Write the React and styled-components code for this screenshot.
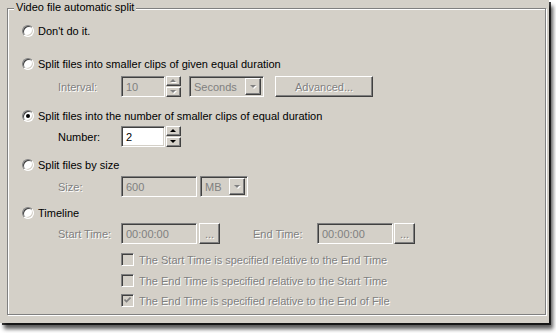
import React from 'react';
import styled, { createGlobalStyle, css } from 'styled-components';

const Global = createGlobalStyle`
    html, body { margin: 0; padding: 0; background: #fff; }
    body {
        min-height: 333px;
        font-family: "Liberation Sans", Arial, sans-serif;
        font-size: 11px;
        color: #000;
    }
`

const face = '#d4d0c8';

const Window = styled.div`
    width: 549px;
    height: 323px;
    margin-bottom: 10px;
    background: ${face};
    box-shadow: 2px 2px 0 rgba(0,0,0,0.75), 4px 6px 4px rgba(0,0,0,0.65);
    padding: 8px 4px 0 7px;
    box-sizing: border-box;
`

const GroupBox = styled.div`
    position: relative;
    width: 539px;
    height: 307px;
    box-sizing: border-box;
    border: 1px solid #808080;
    box-shadow: inset 1px 1px 0 #fff, 1px 1px 0 #fff;
    padding: 15px 0 0 14px;
`

const Legend = styled.span`
    position: absolute;
    top: -8px;
    left: 6px;
    padding: 0 2px 0 2px;
    background: ${face};
    line-height: 13px;
`

const OptionRow = styled.label`
    display: flex;
    align-items: center;
    height: 13px;
    margin-top: ${({ $mt }) => $mt || 0}px;
    gap: 4px;
`

const Radio = styled.span`
    width: 12px;
    height: 12px;
    box-sizing: border-box;
    border-radius: 50%;
    border: 1px solid;
    border-color: #808080 #fff #fff #808080;
    box-shadow: inset 1px 1px 0 #404040, inset -1px -1px 0 ${face};
    background: #fff;
    display: flex;
    align-items: center;
    justify-content: center;
    &::after {
        content: '';
        width: 4px;
        height: 4px;
        border-radius: 50%;
        background: ${({ $on }) => ($on ? '#000' : 'transparent')};
    }
`

const SubRow = styled.div`
    display: flex;
    align-items: center;
    height: 21px;
    margin-top: ${({ $mt }) => $mt || 0}px;
    padding-left: 36px;
`

const embossed = css`
    color: #808080;
    text-shadow: 1px 1px 0 #fff;
`

const Label = styled.span`
    width: ${({ $w }) => $w || 63}px;
    flex: none;
    margin-left: ${({ $ml }) => $ml || 0}px;
    ${({ $disabled }) => $disabled && embossed}
`

const sunken = css`
    box-sizing: border-box;
    border: 1px solid;
    border-color: #808080 #fff #fff #808080;
    box-shadow: inset 1px 1px 0 #404040, inset -1px -1px 0 ${face};
`

const raised = css`
    box-sizing: border-box;
    border: 1px solid;
    border-color: #fff #404040 #404040 #fff;
    box-shadow: inset -1px -1px 0 #808080;
    background: ${face};
`

const Field = styled.div`
    ${sunken};
    width: ${({ $w }) => $w}px;
    height: 21px;
    flex: none;
    display: flex;
    align-items: center;
    padding-left: 4px;
    background: ${({ $disabled }) => ($disabled ? face : '#fff')};
    color: ${({ $disabled }) => ($disabled ? '#808080' : '#000')};
`

const Spin = styled.div`
    display: flex;
    flex-direction: column;
    margin-left: 1px;
    width: 15px;
    height: 21px;
    flex: none;
`

const SpinBtn = styled.div`
    ${raised};
    height: 10px;
    display: flex;
    align-items: center;
    justify-content: center;
    & + & { margin-top: 1px; }
`

const Combo = styled.div`
    ${sunken};
    width: ${({ $w }) => $w}px;
    height: 21px;
    flex: none;
    margin-left: ${({ $ml }) => $ml || 0}px;
    display: flex;
    align-items: center;
    justify-content: space-between;
    padding: 2px 2px 2px 4px;
    color: #808080;
    background: ${face};
`

const ComboBtn = styled.div`
    ${raised};
    width: 16px;
    height: 17px;
    display: flex;
    align-items: center;
    justify-content: center;
`

const Button = styled.div`
    ${raised};
    width: ${({ $w }) => $w}px;
    height: 21px;
    flex: none;
    margin-left: ${({ $ml }) => $ml || 0}px;
    display: flex;
    align-items: center;
    justify-content: center;
    ${embossed};
`

const CheckRow = styled.div`
    display: flex;
    align-items: center;
    gap: 5px;
    height: 13px;
    padding-left: 99px;
    margin-top: ${({ $mt }) => $mt || 0}px;
    ${embossed};
`

const Check = styled.span`
    ${sunken};
    width: 13px;
    height: 13px;
    flex: none;
    background: ${face};
    display: flex;
    align-items: center;
    justify-content: center;
`

const Arrow = ({ dir = 'down', disabled }) => {
    const pts = dir === 'up' ? '0,3 3,0 6,3' : '0,0 6,0 3,3';
    return (
        <svg width="7" height="4" viewBox="0 0 7 4" style={{ overflow: 'visible' }}>
            {disabled && <polygon points={pts} fill="#fff" transform="translate(1,1)" />}
            <polygon points={pts} fill={disabled ? '#808080' : '#000'} />
        </svg>
    )
}

const Spinner = ({ disabled }) => (
    <Spin>
        <SpinBtn><Arrow dir="up" disabled={disabled} /></SpinBtn>
        <SpinBtn><Arrow dir="down" disabled={disabled} /></SpinBtn>
    </Spin>
)

const CheckMark = () => (
    <svg width="7" height="7" viewBox="0 0 7 7">
        <polyline points="0.5,2.5 2.5,4.5 6.5,0.5" fill="none" stroke="#808080" strokeWidth="1.6" />
    </svg>
)

const App = () => (
    <>
        <Global />
        <Window>
            <GroupBox>
                <Legend>Video file automatic split</Legend>

                <OptionRow>
                    <Radio />Don't do it.
                </OptionRow>

                <OptionRow $mt={20}>
                    <Radio />Split files into smaller clips of given equal duration
                </OptionRow>
                <SubRow $mt={6}>
                    <Label $disabled>Interval:</Label>
                    <Field $w={44} $disabled>10</Field>
                    <Spinner disabled />
                    <Combo $w={75} $ml={8}>Seconds<ComboBtn><Arrow disabled /></ComboBtn></Combo>
                    <Button $w={98} $ml={11}>Advanced...</Button>
                </SubRow>

                <OptionRow $mt={12}>
                    <Radio $on />Split files into the number of smaller clips of equal duration
                </OptionRow>
                <SubRow $mt={4}>
                    <Label>Number:</Label>
                    <Field $w={44}>2</Field>
                    <Spinner />
                </SubRow>

                <OptionRow $mt={11}>
                    <Radio />Split files by size
                </OptionRow>
                <SubRow $mt={5}>
                    <Label $disabled>Size:</Label>
                    <Field $w={76} $disabled>600</Field>
                    <Combo $w={48} $ml={3}>MB<ComboBtn><Arrow disabled /></ComboBtn></Combo>
                </SubRow>

                <OptionRow $mt={9}>
                    <Radio />Timeline
                </OptionRow>
                <SubRow $mt={4}>
                    <Label $disabled>Start Time:</Label>
                    <Field $w={76} $disabled>00:00:00</Field>
                    <Button $w={21} $ml={2}>...</Button>
                    <Label $disabled $w={64} $ml={33}>End Time:</Label>
                    <Field $w={76} $disabled>00:00:00</Field>
                    <Button $w={21} $ml={1}>...</Button>
                </SubRow>

                <CheckRow $mt={9}>
                    <Check />The Start Time is specified relative to the End Time
                </CheckRow>
                <CheckRow $mt={8}>
                    <Check />The End Time is specified relative to the Start Time
                </CheckRow>
                <CheckRow $mt={7}>
                    <Check><CheckMark /></Check>The End Time is specified relative to the End of File
                </CheckRow>
            </GroupBox>
        </Window>
    </>
)

export default App
